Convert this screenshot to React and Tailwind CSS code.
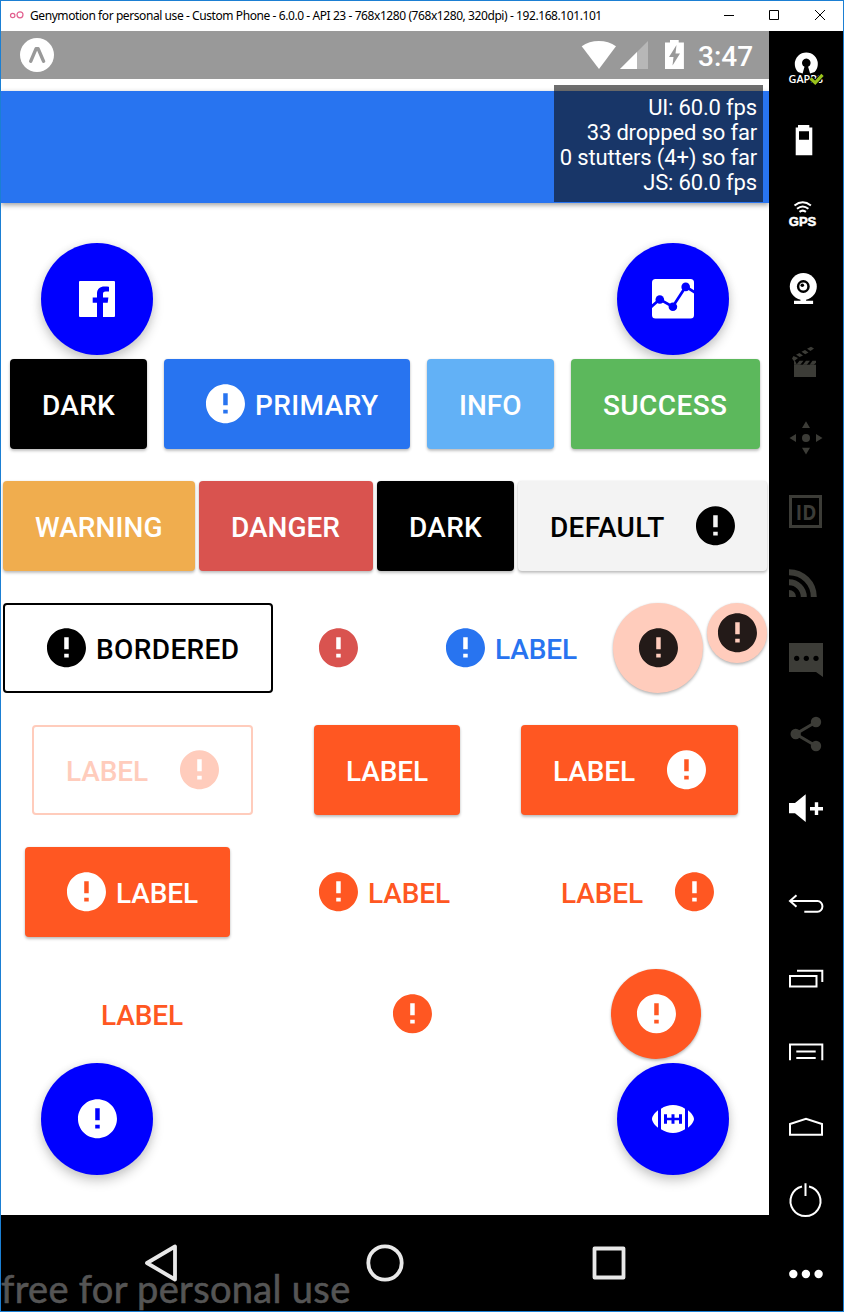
import React from "react";

function AlertIcon({ className = "" }) {
  return (
    <svg viewBox="-5 2 512 512" className={"size-12 shrink-0 " + className} fill="currentColor">
      <path d="M256 48C141.6 48 48 141.6 48 256s93.6 208 208 208 208-93.6 208-208S370.4 48 256 48zm24 312h-48v-40h48v40zm0-88h-48V144h48v128z" />
    </svg>
  );
}

const raised = "shadow-[0_2px_3px_rgba(0,0,0,0.24),0_0_2px_rgba(0,0,0,0.1)]";

const tracking = {
  PRIMARY: "tracking-[0.4px]",
  SUCCESS: "tracking-[0.4px]",
  BORDERED: "tracking-[0.38px]",
  DARK: "tracking-[0.3px]",
  DEFAULT: "tracking-[0.3px]",
  WARNING: "tracking-[0.1px]",
  LABEL: "tracking-[-0.1px]",
};

function Button({ label, icon, className = "" }) {
  const pad = icon === "left" ? "pl-[37px] gap-1.5" : icon === "right" ? "pl-8 pr-7 justify-between" : icon === "only" ? "justify-center pr-px" : "pl-8";
  return (
    <div className={"flex h-[90px] shrink-0 items-center rounded-[4px] " + pad + " " + className}>
      {(icon === "left" || icon === "only") && <AlertIcon />}
      {label && <span className={"pt-[3px] text-[28px] leading-[33px] font-medium whitespace-nowrap " + (tracking[label] || "")}>{label}</span>}
      {icon === "right" && <AlertIcon />}
    </div>
  );
}

function Round({ className = "", children }) {
  return <div className={"flex shrink-0 items-center justify-center rounded-full " + className}>{children}</div>;
}

const fab = "size-28 bg-[#0000ff] text-white shadow-[0_6px_12px_rgba(0,0,0,0.2),0_0_8px_rgba(0,0,0,0.08)]";

function Slot({ dim, children }) {
  return (
    <svg viewBox="0 0 74 74" className={dim ? "size-[74px] shrink-0 text-[#3c3c37]" : "size-[74px] shrink-0 text-white"} fill="currentColor">
      {children}
    </svg>
  );
}

function TitleBar() {
  return (
    <div className="flex h-[30px] shrink-0 items-center bg-white">
      <svg viewBox="0 0 28 30" className="h-[30px] w-7 shrink-0" fill="none" stroke="#e2608f" strokeWidth="1.2">
        <circle cx="11.7" cy="14.5" r="2.2" />
        <circle cx="19" cy="13.8" r="3" />
      </svg>
      <span className="ml-px font-['Noto_Sans'] text-[12px] tracking-[-0.42px] whitespace-nowrap text-black">
        Genymotion for personal use - Custom Phone - 6.0.0 - API 23 - 768x1280 (768x1280, 320dpi) - 192.168.101.101
      </span>
      <svg viewBox="0 0 143 30" className="ml-auto h-[30px] w-[143px] shrink-0" fill="none" stroke="#000" strokeWidth="1">
        <path d="M24 14.5h10M69.5 9.5h9v9h-9z" />
        <path d="M115 9l10 10M125 9l-10 10" />
      </svg>
    </div>
  );
}

function StatusBar() {
  return (
    <div className="flex h-12 shrink-0 items-center bg-[#999999] pl-[19px]">
      <svg viewBox="0 0 34 34" className="size-[34px] shrink-0">
        <circle cx="17" cy="17" r="17" fill="#fff" />
        <path d="M10.7 23.3L16 10.8h2.2L23.6 23.3" fill="none" stroke="#999" strokeWidth="3.4" strokeLinecap="round" strokeLinejoin="round" />
      </svg>
      <svg viewBox="0 0 110 48" className="ml-auto h-12 w-[110px] shrink-0" fill="#fff">
        <path d="M3.7 15.3C13 8.2 28.7 8.2 38 15.3L21 38z" />
        <path d="M70 10v28H42z" opacity=".3" />
        <path d="M59 21v17H42z" />
        <path d="M92 8.9h8.7v2.5h5.2V38H87V11.400h5z" />
        <path d="M98.500 14L91 26h4.500l-1 8.500L102 22.500h-4.500z" fill="#999" />
      </svg>
      <span className="w-[81px] pt-[3px] pl-[10px] text-[28px] leading-[33px] font-medium text-white">3:47</span>
    </div>
  );
}

function Sidebar() {
  return (
    <div className="flex w-[74px] shrink-0 flex-col bg-black">
      <Slot>
        <path d="M33.600 42.500L29 41a11.500 11.500 0 1 1 16.600 0l-4.500 1.500-2-6.700a4.300 4.300 0 1 0-3.600 0z" />
        <text x="19.500" y="51.800" fontSize="10.500" fontWeight="600" fontFamily="Open Sans, sans-serif" textLength="34.500" lengthAdjust="spacingAndGlyphs">GAPPS</text>
        <path d="M41.500 47.300l4.700 4.500 7.300-8" fill="none" stroke="#000" strokeWidth="5" />
        <path d="M41.500 47.300l4.700 4.500 7.300-8" fill="none" stroke="#9ac31c" strokeWidth="3.200" />
      </Slot>
      <Slot>
        <path fillRule="evenodd" d="M29 20h11.300v2.500h3V50.300H26.700V22.500H29zM30 26.300v8.400h10v-8.400z" />
      </Slot>
      <Slot>
        <g fill="none" stroke="currentColor" strokeWidth="2">
          <path d="M25.500 26.500q8.200-6.500 16.400 0M28 29.800q5.700-4.600 11.400 0M30.500 32.900q3.200-2.600 6.400 0" />
        </g>
        <text x="19.800" y="46.500" fontSize="12" fontWeight="700" fontFamily="Liberation Sans, sans-serif" stroke="currentColor" strokeWidth=".5" textLength="27.500" lengthAdjust="spacingAndGlyphs">GPS</text>
      </Slot>
      <Slot>
        <circle cx="34.300" cy="33.500" r="13.500" />
        <path d="M31.500 45h5.600v2.700h7V51H25v-3.300h6.500z" />
        <circle cx="34.300" cy="33.500" r="5.200" fill="none" stroke="#000" strokeWidth="2.500" />
        <circle cx="33.300" cy="32.300" r="1.800" fill="#000" />
      </Slot>
      <Slot dim>
        <path d="M25 37.700h22V50H25z" />
        <path d="M25 33.700h1l2 4h-3zM30.500 33.700h4l-3.200 4h-4zM37 33.700h4l-3.200 4h-4zM43.500 33.700H47v2l-2.200 2h-4.200z" />
        <path d="M23 31.500l1.500-2.500 4.500 2-4 3.200zM27 27.700l3.500-1.800 3.500 2.500-3.300 1.700zM32.500 24.800l3.500-1.800 3.500 2.400-3.300 1.800zM38 21.800l4-2 3 1.800-3.500 2.300z" />
      </Slot>
      <Slot dim>
        <circle cx="37" cy="37" r="4" />
        <path d="M37 20.300l4 6.700h-8zM37 53.500l4-6.700h-8zM20.500 37l6.500-4v8zM53.500 37L47 33v8z" />
      </Slot>
      <Slot dim>
        <rect x="21.500" y="21.500" width="30" height="30" fill="none" stroke="currentColor" strokeWidth="3" />
        <text x="26.800" y="44.600" fontSize="21" fontWeight="700" fontFamily="Open Sans, sans-serif" textLength="20.500" lengthAdjust="spacingAndGlyphs">ID</text>
      </Slot>
      <Slot dim>
        <path d="M20 41a7 7 0 0 1 7 7h-7z" />
        <path d="M20 33.200A14.800 14.800 0 0 1 34.800 48M20 23.200A24.800 24.800 0 0 1 44.800 48" fill="none" stroke="currentColor" strokeWidth="6" />
      </Slot>
      <Slot dim>
        <path d="M20 20h34v34l-7-5H20z" />
        <g fill="#000">
          <circle cx="27.700" cy="35.300" r="2.600" />
          <circle cx="37.300" cy="35.300" r="2.600" />
          <circle cx="47" cy="35.300" r="2.600" />
        </g>
      </Slot>
      <Slot dim>
        <circle cx="26.700" cy="37" r="5.200" />
        <circle cx="47" cy="25" r="5.200" />
        <circle cx="47" cy="49" r="5.200" />
        <path d="M47 25L26.700 37 47 49" fill="none" stroke="currentColor" strokeWidth="3" />
      </Slot>
      <Slot>
        <path d="M20 32h6l10.700-8.700V51L26 42.300h-6zM45.800 31.300h3.400v4.700H54v3.400h-4.800v4.600h-3.400v-4.600H41V36h4.800z" />
      </Slot>
      <div className="h-[22px] shrink-0" />
      <Slot>
        <path d="M27.500 28.300L21 34l6.500 5.800M21 34h27.500a4.800 5.200 0 0 1 0 10.700H35.300" fill="none" stroke="currentColor" strokeWidth="2" />
      </Slot>
      <Slot>
        <path d="M21 35h26.500v10.500H21zM28 29.800h25.300V41" fill="none" stroke="currentColor" strokeWidth="2" />
      </Slot>
      <Slot>
        <path d="M21 45.300V29.500h32.300v15.800M27.300 36.500h19.400M27.300 43h19.400" fill="none" stroke="currentColor" strokeWidth="2" />
      </Slot>
      <Slot>
        <path d="M21 45.700V35l16-5.200L53 35v10.700z" fill="none" stroke="currentColor" strokeWidth="2" />
      </Slot>
      <Slot>
        <path d="M33 23.500a15 15 0 1 0 7 0M36.500 20.300V33" fill="none" stroke="currentColor" strokeWidth="2" />
      </Slot>
      <Slot>
        <circle cx="24.300" cy="37" r="4.200" />
        <circle cx="36.900" cy="37" r="4.200" />
        <circle cx="49.600" cy="37" r="4.200" />
      </Slot>
    </div>
  );
}

export default function App() {
  return (
    <div className="relative flex h-[1312px] w-[844px] flex-col overflow-hidden border border-[#1b7fd3] bg-white font-[Roboto,sans-serif]">
      <TitleBar />
      <div className="flex min-h-0 flex-1">
        <div className="flex w-[768px] shrink-0 flex-col">
          <StatusBar />
          <div className="relative mt-3 h-28 shrink-0 bg-[#2874f0] shadow-[0_2px_5px_rgba(0,0,0,0.38)]">
            <div className="absolute -top-1.5 right-1.5 h-[117px] w-[209px] bg-[rgba(14,14,14,0.6)] pt-[10px] pr-1.5 text-right text-[22px] leading-[25px] tracking-[-0.16px] whitespace-nowrap text-white">
              <div>UI: 60.0 fps</div>
              <div>33 dropped so far</div>
              <div>0 stutters (4+) so far</div>
              <div>JS: 60.0 fps</div>
            </div>
          </div>

          <div className="flex flex-1 flex-col pt-10">
            <div className="flex shrink-0 justify-between px-10">
              <Round className={fab}>
                <svg viewBox="0 0 512 512" className="size-12" fill="currentColor">
                  <path d="M438 64H74c-6 0-10 4-10 10v364c0 6 4 10 10 10H256V296h-45.900v-56H256v-41.400c0-49.600 34.400-76.600 78.700-76.600 21.200 0 44 1.600 49.300 2.300v51.800h-35.300c-24.100 0-28.700 11.400-28.700 28.200V240h57.400l-7.500 56H320v152h118c6 0 10-4 10-10V74c0-6-4-10-10-10z" />
                </svg>
              </Round>
              <Round className={fab}>
                <svg viewBox="0 0 42 39.500" className="h-[39.500px] w-[42px] overflow-hidden">
                  <rect width="42" height="39.500" rx="3.500" fill="#fff" />
                  <g fill="#0000ff">
                    <path d="M-1 28L7.800 20.300l12.900 7.400L33.700 7.700 43 13.500" fill="none" stroke="#0000ff" strokeWidth="2.700" />
                    <circle cx="7.800" cy="20.500" r="4.300" />
                    <circle cx="20.900" cy="27.700" r="4.300" />
                    <circle cx="33.700" cy="7.900" r="4.300" />
                  </g>
                </svg>
              </Round>
            </div>

            <div className="mt-1 flex shrink-0 gap-[17px] pl-[9px] text-white">
              <Button label="DARK" className={"w-[137px] bg-black " + raised} />
              <Button label="PRIMARY" icon="left" className={"w-[246px] bg-[#2874f0] " + raised} />
              <Button label="INFO" className={"w-[127px] bg-[#62b1f6] " + raised} />
              <Button label="SUCCESS" className={"w-[189px] bg-[#5cb85c] " + raised} />
            </div>

            <div className="mt-8 flex shrink-0 gap-1 pl-[2px] text-white">
              <Button label="WARNING" className={"w-[192px] bg-[#f0ad4e] " + raised} />
              <Button label="DANGER" className={"w-[174px] bg-[#d9534f] " + raised} />
              <Button label="DARK" className={"w-[137px] bg-black " + raised} />
              <Button label="DEFAULT" icon="right" className={"w-[249px] bg-[#f3f3f3] text-black " + raised} />
            </div>

            <div className="mt-8 flex shrink-0 gap-1 pl-[2px]">
              <Button label="BORDERED" icon="left" className="w-[270px] border-2 border-black text-black" />
              <Button icon="only" className="w-[123px] text-[#d9534f]" />
              <Button label="LABEL" icon="left" className="w-[205px] text-[#2874f0]" />
              <Round className={"size-[90px] bg-[#ffccbc] text-[#231a18] " + raised}><AlertIcon /></Round>
              <Round className={"size-[60px] bg-[#ffccbc] text-[#231a18] " + raised}><AlertIcon /></Round>
            </div>

            <div className="mt-8 flex shrink-0 gap-[61px] pl-[31px] text-white">
              <Button label="LABEL" icon="right" className="w-[221px] border-2 border-[#ffccbc] text-[#ffccbc]" />
              <Button label="LABEL" className={"w-[146px] bg-[#ff5722] " + raised} />
              <Button label="LABEL" icon="right" className={"w-[217px] bg-[#ff5722] " + raised} />
            </div>

            <div className="mt-8 flex shrink-0 gap-[47px] pl-6 text-[#ff5722]">
              <Button label="LABEL" icon="left" className={"w-[205px] bg-[#ff5722] text-white " + raised} />
              <Button label="LABEL" icon="left" className="w-[205px]" />
              <Button label="LABEL" icon="right" className="w-[217px]" />
            </div>

            <div className="mt-8 flex shrink-0 gap-[136px] pl-[68px] text-[#ff5722]">
              <Button label="LABEL" className="w-[146px]" />
              <Button icon="only" className="w-[123px]" />
              <Round className={"ml-px size-[90px] bg-[#ff5722] text-white " + raised}><AlertIcon /></Round>
            </div>

            <div className="mt-1 flex shrink-0 justify-between px-10">
              <Round className={fab}><AlertIcon /></Round>
              <Round className={fab}>
                <svg viewBox="0 0 42 28" className="h-7 w-[42px]" fill="currentColor">
                  <path d="M6 5.300C3 7.500 0 11.500 0 14s3 6.500 6 8.700zM36 5.300c3 2.200 6 6.200 6 8.700s-3 6.500-6 8.700z" />
                  <path fillRule="evenodd" d="M9 3.700Q14.500 0 21 0t12 3.700v20.600Q27.500 28 21 28T9 24.300zM12 9.300v9.400h3v-3.400h4.500v3.400h3v-3.400H27v3.400h3V9.300h-3v3.400h-4.500V9.300h-3v3.400H15V9.300z" />
                </svg>
              </Round>
            </div>
          </div>

          <div className="flex h-24 shrink-0 items-center justify-between bg-black pr-[142px] pl-[142px] text-[#e8e8e8]">
            <svg viewBox="0 0 36 40" className="h-10 w-9" fill="none" stroke="currentColor" strokeWidth="3.800" strokeLinejoin="round">
              <path d="M32 3.500v33L4 20z" />
            </svg>
            <svg viewBox="0 0 40 40" className="size-10" fill="none" stroke="currentColor" strokeWidth="3.800">
              <circle cx="20" cy="20" r="16.700" />
            </svg>
            <svg viewBox="0 0 36 36" className="size-9" fill="none" stroke="currentColor" strokeWidth="3.800" strokeLinejoin="round">
              <path d="M3.500 3.500h29v29h-29z" />
            </svg>
          </div>
        </div>
        <Sidebar />
      </div>
      <div className="absolute bottom-0 left-0 font-['Lato',sans-serif] text-[38px] leading-[46px] tracking-[0.32px] whitespace-nowrap text-[#555555] [-webkit-text-stroke:0.6px_#555555]">free for personal use</div>
    </div>
  );
}
